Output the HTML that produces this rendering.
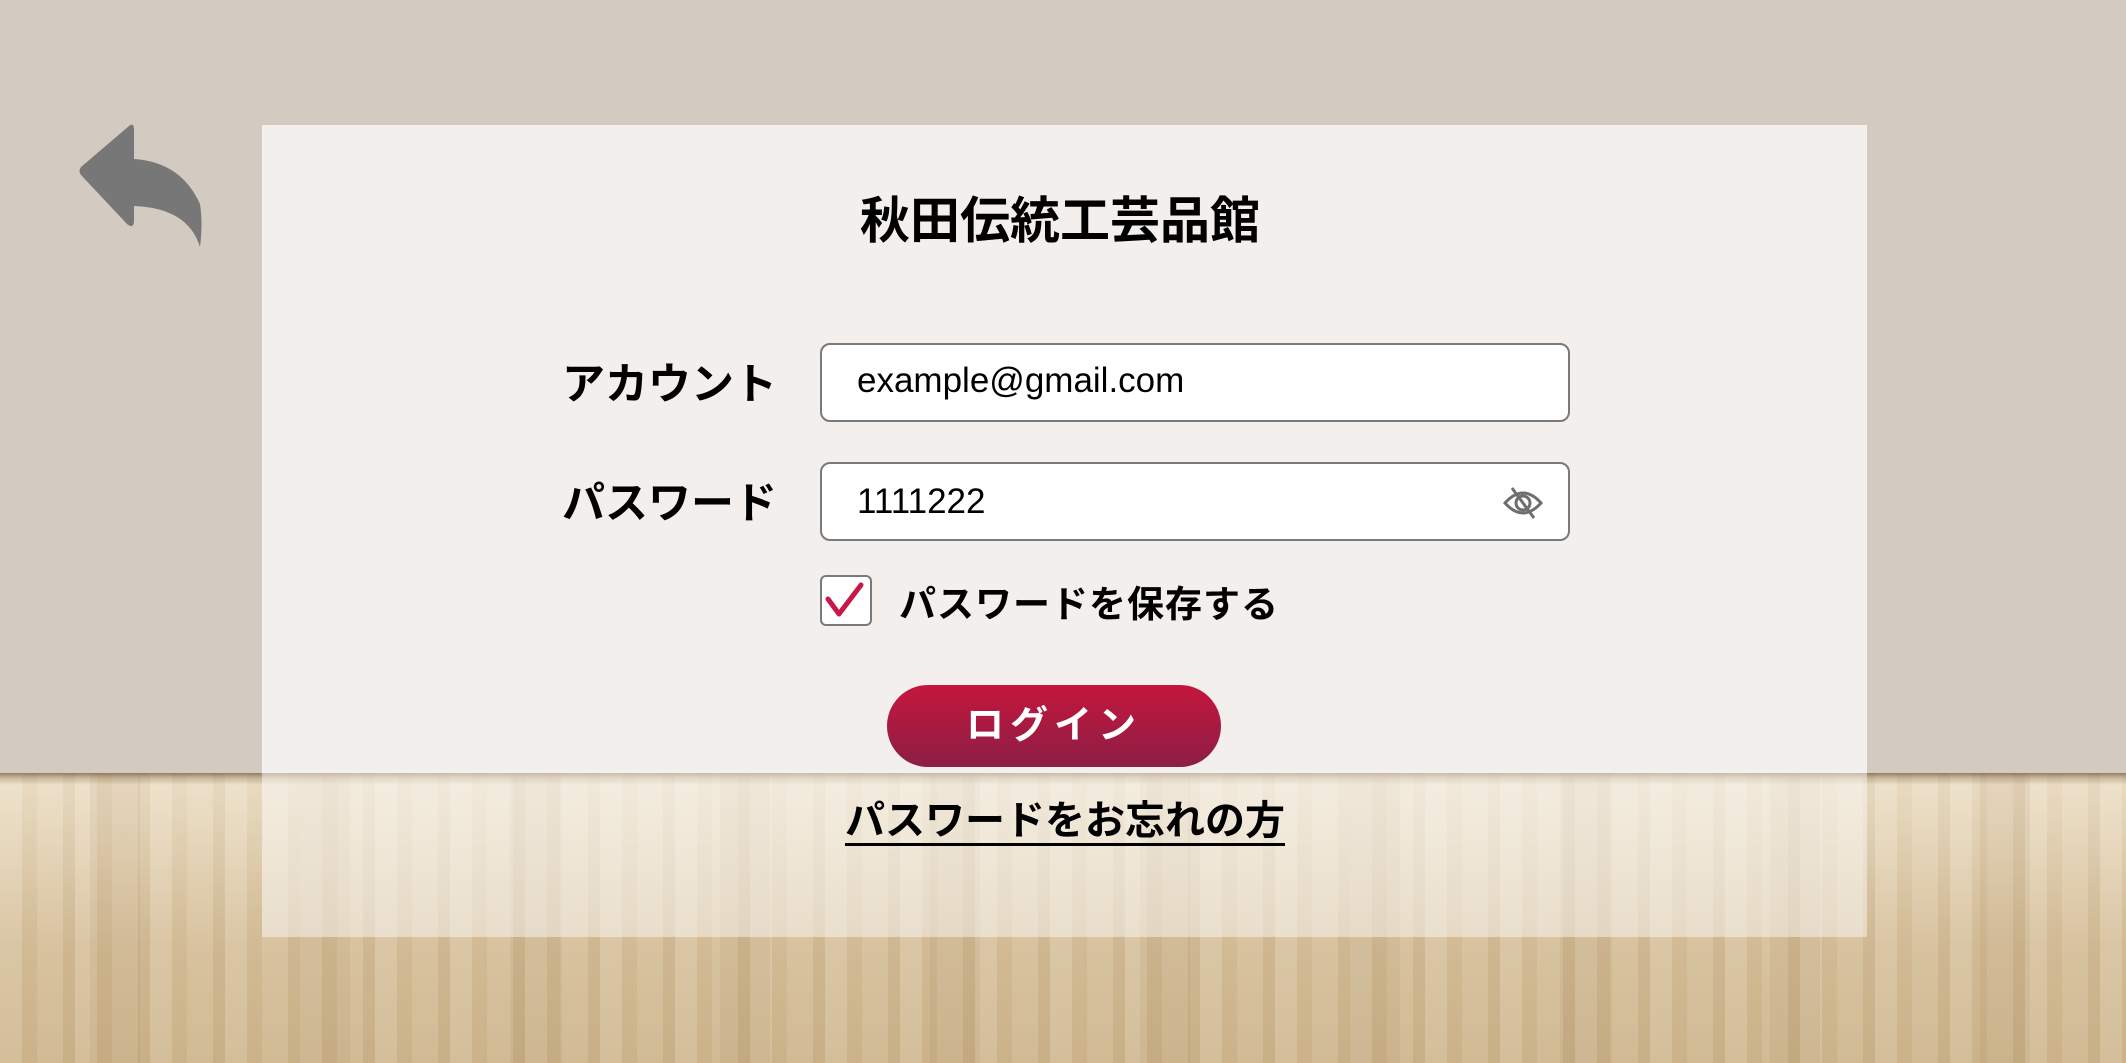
<!DOCTYPE html>
<html><head><meta charset="utf-8"><style>
*{margin:0;padding:0;box-sizing:border-box}
html,body{width:2126px;height:1063px;overflow:hidden}
body{position:relative;background:#d3cac1;font-family:"Liberation Sans","Noto Sans CJK JP",sans-serif;color:#000}
.floor{position:absolute;left:0;top:773px;width:2126px;height:290px;
background:
linear-gradient(180deg,rgba(90,60,30,.6) 0,rgba(120,90,50,.3) 5px,rgba(255,255,255,0) 12px),
linear-gradient(180deg,rgba(255,250,240,.35) 0,rgba(255,255,255,0) 60%),
repeating-linear-gradient(90deg,rgba(255,255,255,.10) 0 22px,rgba(150,110,60,.07) 22px 37px,rgba(255,255,255,.05) 37px 63px,rgba(130,95,50,.09) 63px 75px),
linear-gradient(180deg,#e3d2b3 0,#d9c4a0 40%,#cfb78f 100%);}
.floor:before{content:"";position:absolute;inset:0;background:repeating-linear-gradient(90deg,rgba(0,0,0,0) 0 90px,rgba(130,90,45,.08) 90px 140px,rgba(0,0,0,0) 140px 210px);}
.panel{position:absolute;left:262px;top:125px;width:1605px;height:648px;background:#f2efec}
.ov{position:absolute;left:262px;top:773px;width:1605px;height:164px;background:rgba(250,248,244,.5)}
.t{position:absolute;white-space:nowrap}
.title{left:860px;top:181px;font-size:50px;font-weight:bold}
.lbl{font-size:43px;font-weight:bold;right:1349px}
.inp{position:absolute;left:820px;width:750px;height:79px;border:2px solid #7a7a7a;border-radius:10px;background:#fff}
.it{position:absolute;left:35px;top:16px;font-size:35px}
.chk{position:absolute;left:820px;top:575px;width:52px;height:51px;border:2px solid #7a7a7a;border-radius:6px;background:#fff}
.btn{position:absolute;left:887px;top:685px;width:334px;height:82px;border-radius:41px;background:linear-gradient(180deg,#c5163d,#8c1e45);color:#fff;font-size:38px;font-weight:bold;text-align:center;line-height:82px;letter-spacing:6px}
.fg{left:845px;top:799px;font-size:40px;font-weight:bold;border-bottom:3px solid #000;padding-bottom:0px;line-height:44px}
</style></head><body>
<div class="floor"></div>
<div class="panel"></div>
<div class="ov"></div>
<svg style="position:absolute;left:76px;top:120px" width="130" height="130" viewBox="0 0 130 130">
<path d="M53 6 Q58 2 58 10 L58 39 Q105 42 124 84 Q127 103 124 127 Q112 88 58 86 L58 102 Q57 109 51 104 L5 55 Q2 51 5 47 Z" fill="#777"/>
</svg>
<div class="t title">秋田伝統工芸品館</div>
<div class="t lbl" style="top:350px">アカウント</div>
<div class="t lbl" style="top:469px">パスワード</div>
<div class="inp" style="top:343px"><div class="t it">example@gmail.com</div></div>
<div class="inp" style="top:462px"><div class="t it" style="top:18px">1111222</div>
<svg style="position:absolute;left:680px;top:22px" width="42" height="34" viewBox="0 0 42 34"><path d="M3 17 Q21 -3 39 17 Q21 37 3 17 Z" fill="none" stroke="#6e6e6e" stroke-width="3"/><circle cx="21" cy="17" r="7" fill="none" stroke="#6e6e6e" stroke-width="3"/><line x1="10" y1="2" x2="32" y2="32" stroke="#6e6e6e" stroke-width="3"/></svg>
</div>
<div class="chk"><svg width="48" height="47" viewBox="0 0 48 47"><path d="M6 22 L17 37 L39 8" fill="none" stroke="#c7184a" stroke-width="5" stroke-linecap="round" stroke-linejoin="round"/></svg></div>
<div class="t" style="left:899px;top:574px;font-size:37px;font-weight:bold;letter-spacing:1px">パスワードを保存する</div>
<div class="btn">ログイン</div>
<div class="t fg">パスワードをお忘れの方</div>
</body></html>
